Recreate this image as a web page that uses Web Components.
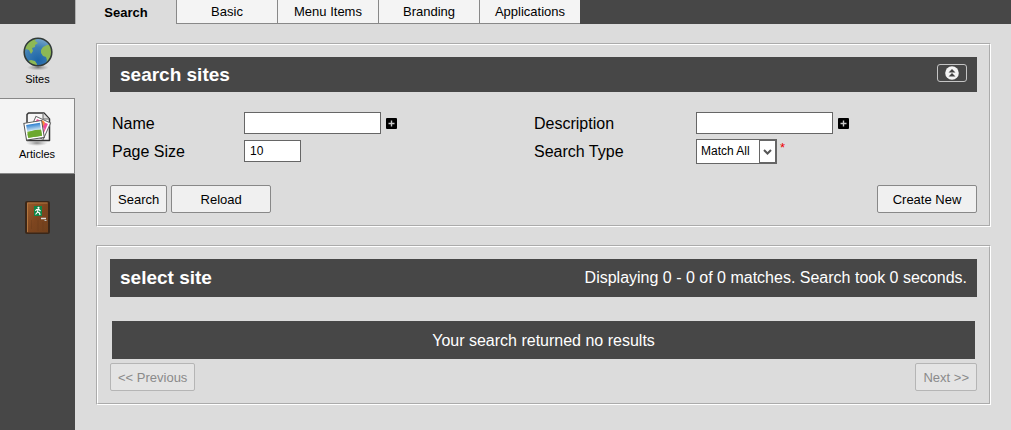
<!DOCTYPE html>
<html lang="en">
<head>
<meta charset="utf-8">
<meta name="viewport" content="width=device-width, initial-scale=1">
<title>Sites</title>
<style>
  html, body { margin: 0; height: 100%; }
  body { background: #dcdcdc; color: #000; font: 16px/20px "Liberation Sans", Arial, sans-serif; }
</style>
</head>
<body>
<cms-shell>
  <tab-bar slot="tabs">
    <tab-link current>Search</tab-link>
    <tab-link>Basic</tab-link>
    <tab-link>Menu Items</tab-link>
    <tab-link>Branding</tab-link>
    <tab-link>Applications</tab-link>
  </tab-bar>
  <nav-item slot="nav" current>
    <svg slot="icon" width="34" height="36" viewBox="0 0 34 36" aria-hidden="true">
      <defs>
        <radialGradient id="sea" cx=".5" cy=".8" r=".8"><stop offset="0" stop-color="#1c64a8"/><stop offset=".6" stop-color="#3f7fb4"/><stop offset="1" stop-color="#7ba9cb"/></radialGradient>
        <radialGradient id="shade"><stop offset="0" stop-color="#777"/><stop offset="1" stop-color="#999" stop-opacity="0"/></radialGradient>
        <clipPath id="disc"><circle cx="17" cy="16" r="13.5"/></clipPath>
      </defs>
      <ellipse cx="17" cy="31.500" rx="11" ry="3" fill="url(#shade)"/>
      <circle cx="17" cy="16" r="14" fill="url(#sea)"/>
      <g clip-path="url(#disc)" fill="#8db855">
        <path d="M3 12 5 7 10 3 15 3 14 5 17 7 14 9 14 11 11 12 12 15 10 18 8 14 5 13 3 15Z"/>
        <path d="M31 9 26 9 22 11 20 14 20 17 22 20 25 21 26 24 25 28 32 24 33 12Z"/>
        <path d="M7 25 10 24 14 25 16 28 16 31 10 31Z"/>
      </g>
      <circle cx="17" cy="16" r="13.800" fill="none" stroke="#333b38" stroke-width="1.600"/>
    </svg>
    Sites
  </nav-item>
  <nav-item slot="nav">
    <svg slot="icon" width="34" height="36" viewBox="0 0 34 36" aria-hidden="true">
      <defs>
        <linearGradient id="sky" x2="0" y2="1"><stop offset="0" stop-color="#2d7fd0"/><stop offset=".5" stop-color="#cfe5f2"/><stop offset=".55" stop-color="#83b83a"/><stop offset="1" stop-color="#5c9d25"/></linearGradient>
        <radialGradient id="under"><stop offset="0" stop-color="#888"/><stop offset="1" stop-color="#aaa" stop-opacity="0"/></radialGradient>
      </defs>
      <ellipse cx="17" cy="32" rx="11" ry="3" fill="url(#under)"/>
      <path d="M8.500 2H24L29.500 8V29.500H7V3.500Z" fill="#f6f6f6" stroke="#333" stroke-width="1.500" stroke-linejoin="round"/>
      <path d="M23 2V8H29" fill="#ddd" stroke="#666"/>
      <g transform="rotate(24 20 16)">
        <rect x="12" y="8" width="16" height="18" fill="#fff" stroke="#666"/>
        <rect x="14" y="10" width="12" height="13" fill="#ef4c9a"/>
        <circle cx="20" cy="12" r="3" fill="#ff8b38"/><circle cx="23" cy="17" r="2" fill="#ffb0c9"/>
      </g>
      <g transform="rotate(-9 13 19)">
        <rect x="5" y="11" width="18" height="17" fill="#fff" stroke="#555"/>
        <rect x="7" y="13" width="14" height="13" fill="url(#sky)"/>
        <path d="M7 22Q12 18 21 20V26H7Z" fill="#6ca82e"/>
      </g>
    </svg>
    Articles
  </nav-item>
  <nav-item slot="exit" plain>
    <svg slot="icon" width="28" height="36" viewBox="0 0 28 36" role="img" aria-label="Log out">
      <defs><linearGradient id="wood" x2="1" y2="1"><stop offset="0" stop-color="#9a5d2c"/><stop offset=".5" stop-color="#7d451f"/><stop offset="1" stop-color="#70401c"/></linearGradient></defs>
      <rect x="1" y="1" width="25" height="33" rx="2" fill="#3a2719"/>
      <rect x="3" y="2.500" width="21" height="30" fill="url(#wood)"/>
      <path d="M3.500 32V3H23.500" fill="none" stroke="#b27640"/>
      <path d="M7.500 20V29M14 20V31M19 22V31" stroke="#663a1a" opacity=".4"/>
      <rect x="10" y="6" width="8" height="10" fill="#118547"/>
      <circle cx="14.500" cy="7.800" r="1.100" fill="#fff"/>
      <path d="M14 9.500 13.500 12 11.500 14.500M13.500 12 15.500 13 16 15M11.500 11 12.500 9.500 15 9.500 16.500 11" fill="none" stroke="#fff" stroke-width="1.200"/>
      <path d="M17 18.500H22" stroke="#ddd" stroke-width="1.500"/><path d="M20.500 20.500H22.500" stroke="#bbb"/>
    </svg>
  </nav-item>
  <search-panel></search-panel>
  <results-panel></results-panel>
</cms-shell>

<script>
const define = (name, html, setup) => customElements.define(name, class extends HTMLElement {
  constructor() {
    super();
    const template = document.createElement('template');
    template.innerHTML = html;
    this.attachShadow({ mode: 'open' }).append(template.content.cloneNode(true));
  }
  connectedCallback() { if (setup) setup(this, this.shadowRoot); }
});

define('tab-link', `
<style>
  :host { display: block; box-sizing: border-box; width: 101px; height: 24px; background: #f4f4f4; border: solid #888; border-width: 0 0 1px 1px; font-size: 13px; line-height: 23px; text-align: center; }
  :host([current]) { background: #dcdcdc; border-bottom: 0; border-left-color: #b0b0b0; font-weight: bold; line-height: 25px; }
  a { display: block; color: inherit; text-decoration: none; }
</style>
<a href="#"><slot></slot></a>`);

define('tab-bar', `
<style>:host { display: block; } nav { display: flex; }</style>
<nav aria-label="Sections"><slot></slot></nav>`);

define('nav-item', `
<style>
  :host { display: block; box-sizing: border-box; height: 76px; background: #f4f4f4; border: solid #888; border-width: 1px 1px 1px 0; font-size: 11px; line-height: 14px; }
  :host([current]) { height: 74px; background: #dcdcdc; border: 0; }
  :host([plain]) { background: none; border: 0; }
  a { display: flex; flex-direction: column; align-items: center; padding-top: 12px; color: inherit; text-decoration: none; }
</style>
<a href="#"><slot name="icon"></slot><span><slot></slot></span></a>`);

define('cms-shell', `
<style>
  :host { display: grid; grid-template-columns: 75px minmax(0, 1fr); grid-template-rows: 24px 1fr; min-height: 100vh; background: #dcdcdc; }
  header { grid-column: 1 / -1; background: #474747; padding-left: 75px; }
  aside { background: #474747; }
  .exit { padding-top: 14px; }
  main { display: flex; flex-direction: column; gap: 18px; padding: 19px 20px 24px 21px; }
</style>
<header><slot name="tabs"></slot></header>
<aside><slot name="nav"></slot><div class="exit"><slot name="exit"></slot></div></aside>
<main><slot></slot></main>`);

define('panel-box', `
<style>
  :host { display: block; }
  section { border: 2px groove #fff; padding: 12px; }
  header { display: flex; align-items: center; justify-content: space-between; box-sizing: border-box; height: var(--bar-height, 38px); padding: 0 10px; background: #474747; color: #fff; }
  h2 { margin: 0; font-size: 19px; line-height: 22px; }
</style>
<section><header><h2><slot name="title"></slot></h2><slot name="aside"></slot></header><slot></slot></section>`);

define('push-button', `
<style>
  :host { display: block; }
  button { display: block; box-sizing: border-box; width: 100%; height: 28px; padding: 2px 7px 0; border: 1px solid #888; border-radius: 2px; background: #f0f0f0; color: #000; font: 13px/20px "Liberation Sans", Arial, sans-serif; white-space: nowrap; }
  button:disabled { border-color: #b5b5b5; background: #e4e4e4; color: #8a8a8a; }
</style>
<button type="button"><slot></slot></button>`, (host, root) => {
  root.querySelector('button').disabled = host.hasAttribute('disabled');
});

/* Label and control are cells of the grid that holds the field. */
define('text-field', `
<style>
  :host { display: contents; }
  label { white-space: nowrap; line-height: 24px; height: 22px; }
  div { display: flex; align-items: center; gap: 5px; height: 22px; }
  input { box-sizing: border-box; width: var(--field-width, 137px); height: 22px; margin: 0; padding: 0 5px; border: 1px solid #666; border-radius: 0; background: #fff; font: 12px "Liberation Sans", Arial, sans-serif; }
  button { display: flex; padding: 0; border: 0; background: none; }
</style>
<label for="control"></label>
<div><input id="control" type="text"><button type="button" aria-label="Add condition"><svg width="11" height="11" viewBox="0 0 11 11"><rect width="11" height="11" rx="1" fill="#000"/><path d="M5.500 2.500V8.500M2.500 5.500H8.500" stroke="#ccc" stroke-width="1.400"/></svg></button></div>`, (host, root) => {
  root.querySelector('label').textContent = host.getAttribute('label');
  root.querySelector('input').value = host.getAttribute('value') || '';
  if (!host.hasAttribute('expandable')) root.querySelector('button').remove();
});

define('select-field', `
<style>
  :host { display: contents; }
  label { white-space: nowrap; line-height: 24px; height: 22px; }
  .row { display: flex; gap: 3px; height: 22px; }
  .box { position: relative; align-self: center; }
  select { display: block; appearance: none; box-sizing: border-box; width: 81px; height: 25px; margin: 0; padding: 0 20px 0 4px; border: 1px solid #666; border-right-width: 2px; border-radius: 0; background: #fff; color: #000; font: 12px "Liberation Sans", Arial, sans-serif; }
  svg { position: absolute; top: 1px; right: 1px; pointer-events: none; }
  .required { color: #e00; font-size: 13px; line-height: 16px; }
</style>
<label for="control"></label>
<div class="row"><div class="box"><select id="control"><option>Match All</option><option>Match Any</option></select>
<svg width="17" height="23" viewBox="0 0 17 23" aria-hidden="true"><rect x=".5" y=".5" width="16" height="22" fill="#fff" stroke="#666"/><path d="M5 10 8.500 13.500 12 10" fill="none" stroke="#555" stroke-width="2"/></svg></div><span class="required">*</span></div>`, (host, root) => {
  root.querySelector('label').textContent = host.getAttribute('label');
});

define('search-panel', `
<style>
  :host { display: block; }
  panel-box { --bar-height: 35px; }
  .collapse { display: flex; align-items: center; justify-content: center; box-sizing: border-box; width: 30px; height: 18px; padding: 0; border: 1px solid #c4c4c4; border-radius: 3px; background: none; margin-bottom: 3px; }
  form { margin: 0; }
  .fields { display: grid; grid-template-columns: 132fr 290fr 162fr 279fr; row-gap: 6px; padding: 20px 2px 23px; }
  .short { --field-width: 57px; }
  .actions { display: flex; gap: 4px; }
  .wide { width: 100px; }
  .last { margin-left: auto; }
</style>
<panel-box>
  <span slot="title">search sites</span>
  <button class="collapse" slot="aside" type="button" aria-label="Collapse"><svg width="14" height="14" viewBox="0 0 14 14"><circle cx="7" cy="7" r="6.800" fill="#f4f4f4"/><path d="M3.500 6.500 7 3 10.500 6.500ZM3.500 10.500 7 7 10.500 10.500Z" fill="#444"/></svg></button>
  <form>
    <div class="fields">
      <text-field label="Name" expandable></text-field>
      <text-field label="Description" expandable></text-field>
      <text-field class="short" label="Page Size" value="10"></text-field>
      <select-field label="Search Type"></select-field>
    </div>
    <div class="actions">
      <push-button>Search</push-button>
      <push-button class="wide">Reload</push-button>
      <push-button class="wide last">Create New</push-button>
    </div>
  </form>
</panel-box>`);

define('results-panel', `
<style>
  :host { display: block; }
  .empty { margin: 24px 2px 4px; padding: 10px 9px 8px; background: #474747; color: #fff; text-align: center; }
  .pager { display: flex; justify-content: space-between; }
</style>
<panel-box>
  <span slot="title">select site</span>
  <span slot="aside">Displaying 0 - 0 of 0 matches. Search took 0 seconds.</span>
  <p class="empty">Your search returned no results</p>
  <div class="pager">
    <push-button disabled>&lt;&lt; Previous</push-button>
    <push-button disabled>Next &gt;&gt;</push-button>
  </div>
</panel-box>`);
</script>
</body>
</html>
